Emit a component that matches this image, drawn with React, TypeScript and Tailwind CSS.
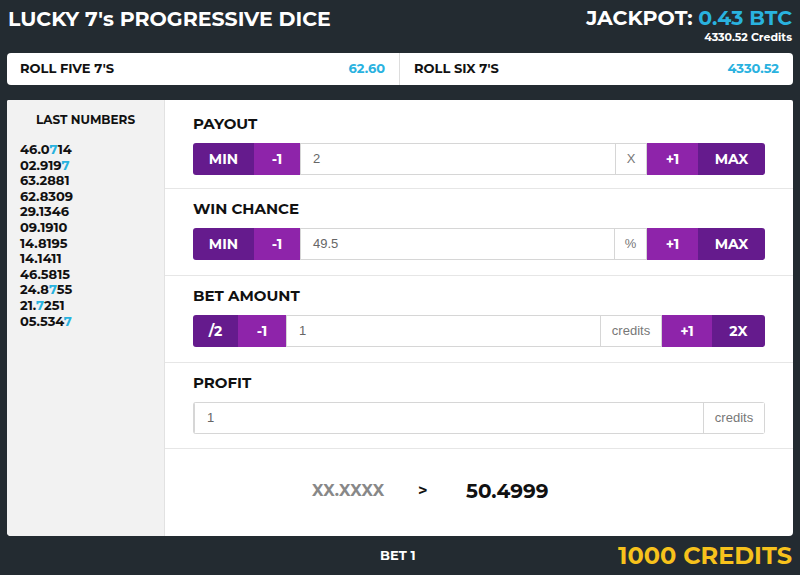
const HEAD = "font-['Montserrat','Lato','Noto_Sans',sans-serif]";

const lastNumbers: [string, number | null][] = [
  ['46.0714', 4],
  ['02.9197', 6],
  ['63.2881', null],
  ['62.8309', null],
  ['29.1346', null],
  ['09.1910', null],
  ['14.8195', null],
  ['14.1411', null],
  ['46.5815', null],
  ['24.8755', 4],
  ['21.7251', 3],
  ['05.5347', 6],
];

function Num({value, hi}: {value: string; hi: number | null}) {
  return (
    <div>
      {value.split('').map((c, i) => (
        <span key={i} className={i === hi ? 'text-[#29b2df]' : ''}>
          {c}
        </span>
      ))}
    </div>
  );
}

const dark = 'bg-[#651b8d]';
const light = 'bg-[#8e24aa]';

function Btn({label, cls, w}: {label: string; cls: string; w: string}) {
  return (
    <div
      className={`${cls} ${w} flex h-full items-center justify-center text-[14px] font-bold text-white ${HEAD}`}
    >
      {label}
    </div>
  );
}

function Field({value}: {value: string}) {
  return (
    <div className="flex h-full flex-1 items-center border-y border-l border-[#d6d6d6] px-3 font-['Liberation_Sans',sans-serif] text-[13px] text-[#666]">
      {value}
    </div>
  );
}

function Addon({label, w}: {label: string; w: string}) {
  return (
    <div
      className={`${w} flex h-full items-center justify-center border border-[#d6d6d6] font-['Liberation_Sans',sans-serif] text-[13px] text-[#777]`}
    >
      {label}
    </div>
  );
}

function Label({children}: {children: string}) {
  return (
    <div className={`mb-[9px] text-[15px] leading-5 font-bold text-[#111] ${HEAD}`}>
      {children}
    </div>
  );
}

export default function App() {
  return (
    <div className="flex h-[575px] w-[800px] flex-col bg-[#232b31] text-[#111]">
      {/* header */}
      <div className="flex h-[44px] items-start justify-between px-2 pt-[5px]">
        <h1 className={`text-[20.5px] leading-7 font-bold text-white ${HEAD}`}>
          LUCKY 7's PROGRESSIVE DICE
        </h1>
        <div className={`flex flex-col items-end ${HEAD}`}>
          <div className="text-[20.5px] leading-[26px] font-bold text-white">
            JACKPOT: <span className="text-[#29b2df]">0.43 BTC</span>
          </div>
          <div className="text-[11px] leading-3 font-bold text-white">
            4330.52 Credits
          </div>
        </div>
      </div>

      {/* progressive bar */}
      <div
        className={`mx-[7px] mt-[9px] flex h-[32px] rounded-[4px] bg-white text-[13px] font-bold ${HEAD}`}
      >
        <div className="flex flex-1 items-center justify-between border-r border-[#ddd] pr-[14px] pl-[13px]">
          <span>ROLL FIVE 7'S</span>
          <span className="text-[#29b2df]">62.60</span>
        </div>
        <div className="flex flex-1 items-center justify-between pr-[14px] pl-[14px]">
          <span>ROLL SIX 7'S</span>
          <span className="text-[#29b2df]">4330.52</span>
        </div>
      </div>

      {/* main panel */}
      <div className="mx-[7px] mt-[15px] flex h-[436px] overflow-hidden rounded-b-[4px] rounded-t-[2px] bg-white">
        <div className={`w-[158px] border-r border-[#e2e2e2] bg-[#f2f2f2] ${HEAD}`}>
          <div className="pt-[11px] text-center text-[12px] font-bold">LAST NUMBERS</div>
          <div className="mt-[13px] pl-[13px] text-[13px] leading-[15.6px] font-bold">
            {lastNumbers.map(([v, h], i) => (
              <Num key={i} value={v} hi={h} />
            ))}
          </div>
        </div>

        <div className="flex flex-1 flex-col">
          <div className="border-b border-[#e6e6e6] px-[28px] pt-[14px] pb-[13px]">
            <Label>PAYOUT</Label>
            <div className="flex h-8 overflow-hidden rounded-[3px]">
              <Btn label="MIN" cls={dark} w="w-[61px]" />
              <Btn label="-1" cls={light} w="w-[46px]" />
              <Field value="2" />
              <Addon label="X" w="w-[32px]" />
              <Btn label="+1" cls={light} w="w-[51px]" />
              <Btn label="MAX" cls={dark} w="w-[67px]" />
            </div>
          </div>

          <div className="border-b border-[#e6e6e6] px-[28px] pt-[10px] pb-[15px]">
            <Label>WIN CHANCE</Label>
            <div className="flex h-8 overflow-hidden rounded-[3px]">
              <Btn label="MIN" cls={dark} w="w-[61px]" />
              <Btn label="-1" cls={light} w="w-[46px]" />
              <Field value="49.5" />
              <Addon label="%" w="w-[33px]" />
              <Btn label="+1" cls={light} w="w-[51px]" />
              <Btn label="MAX" cls={dark} w="w-[67px]" />
            </div>
          </div>

          <div className="border-b border-[#e6e6e6] px-[28px] pt-[10px] pb-[15px]">
            <Label>BET AMOUNT</Label>
            <div className="flex h-8 overflow-hidden rounded-[3px]">
              <Btn label="/2" cls={dark} w="w-[45px]" />
              <Btn label="-1" cls={light} w="w-[48px]" />
              <Field value="1" />
              <Addon label="credits" w="w-[62px]" />
              <Btn label="+1" cls={light} w="w-[50px]" />
              <Btn label="2X" cls={dark} w="w-[53px]" />
            </div>
          </div>

          <div className="border-b border-[#e6e6e6] px-[28px] pt-[10px] pb-[14px]">
            <Label>PROFIT</Label>
            <div className="flex h-8 overflow-hidden rounded-[3px] border-l border-[#d6d6d6]">
              <Field value="1" />
              <Addon label="credits" w="w-[62px]" />
            </div>
          </div>

          <div className={`flex flex-1 items-center pb-[4px] pl-[147px] ${HEAD}`}>
            <span className="w-[106px] text-[16px] font-bold text-[#888]">XX.XXXX</span>
            <span className="w-[48px] text-[16px] font-bold">&gt;</span>
            <span className="text-[20px] font-bold">50.4999</span>
          </div>
        </div>
      </div>

      {/* footer */}
      <div className={`relative flex flex-1 items-center justify-end px-2 ${HEAD}`}>
        <span className="absolute left-[380px] text-[13px] font-bold text-white">BET 1</span>
        <span className="text-[24px] font-bold text-[#f7c21c]">1000 CREDITS</span>
      </div>
    </div>
  );
}
